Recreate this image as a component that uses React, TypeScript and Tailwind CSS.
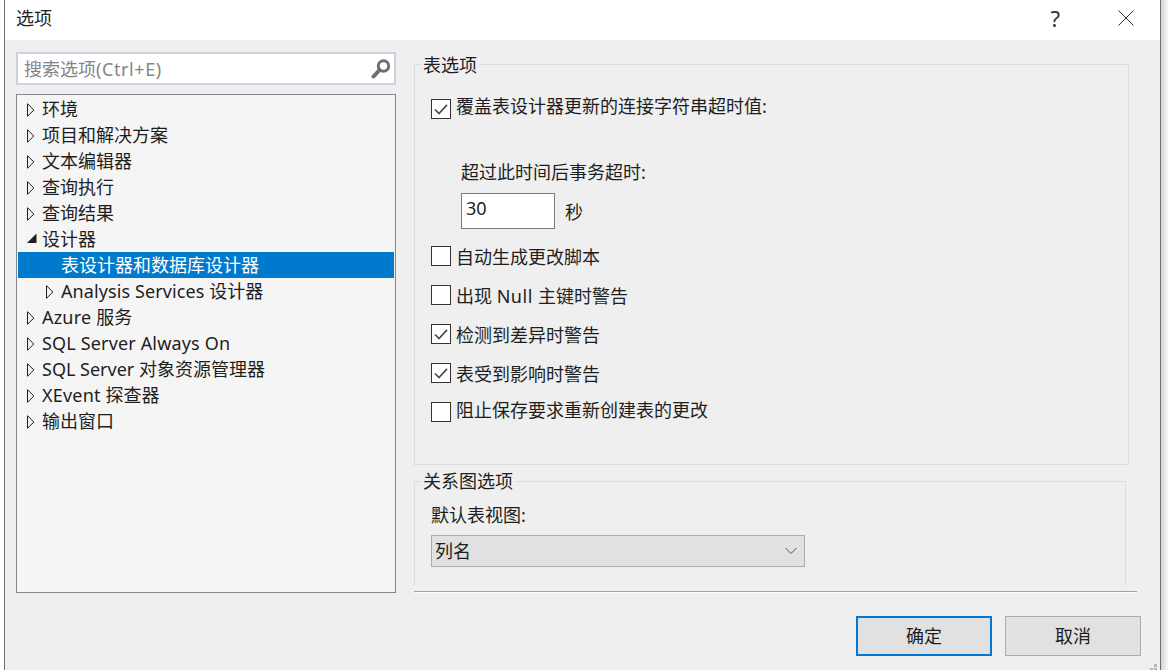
import React from "react";

function Arrow({ open }: { open?: boolean }) {
  if (open) {
    return (
      <svg width="10" height="10" viewBox="0 0 10 10" className="shrink-0 mb-[2px]">
        <path d="M0 10 L9.5 10 L9.5 0.5 Z" fill="#1e1e1e" />
      </svg>
    );
  }
  return (
    <svg width="8" height="14" viewBox="0 0 8 14" className="shrink-0 mt-[2px]">
      <path d="M0.5 0.7 L6.8 7 L0.5 13.3 Z" fill="none" stroke="#1e1e1e" strokeWidth="1" />
    </svg>
  );
}

function L({ children }: { children: React.ReactNode }) {
  return <span className="tracking-[0.2px]">{children}</span>;
}

function TreeRow({ label, open, sub, selected, leaf }: { label: React.ReactNode; open?: boolean; sub?: boolean; selected?: boolean; leaf?: boolean }) {
  return (
    <div className={`flex items-center h-[26px] ${selected ? "bg-[#007acc] text-white" : "text-[#1e1e1e]"}`}>
      <div className={`${sub ? "w-[43px] pl-[28px]" : "w-[24px] pl-[9px]"} flex items-center ${open ? "pl-[7px]" : ""} shrink-0`}>
        {!leaf && <Arrow open={open} />}
      </div>
      <span className="whitespace-nowrap">{label}</span>
    </div>
  );
}

function Tick() {
  return (
    <svg width="14" height="11" viewBox="0 0 14 11">
      <path d="M1 5.5 L5 9.5 L13 0.8" fill="none" stroke="#4a4a4a" strokeWidth="1.7" />
    </svg>
  );
}

function Check({ label, checked, last }: { label: React.ReactNode; checked?: boolean; last?: boolean }) {
  return (
    <div className="flex items-center h-5 mt-[19px]">
      <div className="w-5 h-5 bg-white border border-[#333333] flex items-center justify-center shrink-0">
        {checked && <Tick />}
      </div>
      <span className={`ml-[5px] whitespace-nowrap leading-6 ${last ? "mb-[4px]" : "mt-[2px]"}`}>{label}</span>
    </div>
  );
}

function Legend({ children }: { children: React.ReactNode }) {
  return <div className="-mt-[12px] ml-[6px] px-[2px] w-fit h-6 leading-6 bg-[#efefef]">{children}</div>;
}

export default function App() {
  return (
    <div className="w-[1168px] h-[670px] bg-white flex pl-1 overflow-hidden text-[18px] leading-6 text-[#1e1e1e] font-['Noto_Sans','Noto_Sans_CJK_SC',sans-serif]">
      <div className="w-[1157px] h-full border-x border-[#707070] flex flex-col shrink-0 relative">
        <div className="h-10 bg-white flex items-center pl-[11px] shrink-0">
          <span className="mb-1">选项</span>
          <span className="ml-auto text-[#333333] text-[22px] mb-[4px]">?</span>
          <svg width="16" height="16" viewBox="0 0 16 16" className="ml-[58px] mr-[26px] mb-[5px]">
            <path d="M0.5 0.5 L15.5 15.5 M15.5 0.5 L0.5 15.5" stroke="#333333" strokeWidth="1" fill="none" />
          </svg>
        </div>
        <div className="flex-1 bg-[#efefef] flex flex-col">
          <div className="flex pt-3 pl-[11px]">
            <div className="w-[380px] flex flex-col shrink-0">
              <div className="h-[33px] bg-white border-2 border-[#cfd0e0] flex items-center pl-[6px] pr-[3px]">
                <span className="text-[#848484] mt-[1px]">搜索选项<span className="tracking-[0.6px]">(Ctrl+E)</span></span>
                <svg width="20" height="20" viewBox="0 0 20 20" className="ml-auto">
                  <circle cx="12.5" cy="7" r="5.2" fill="none" stroke="#6e6e6e" strokeWidth="3" />
                  <path d="M8.5 11 L2.5 17.5" stroke="#6e6e6e" strokeWidth="4" strokeLinecap="round" />
                </svg>
              </div>
              <div className="mt-[9px] h-[499px] bg-[#f5f5f5] border border-[#828790] p-px">
                <TreeRow label="环境" />
                <TreeRow label="项目和解决方案" />
                <TreeRow label="文本编辑器" />
                <TreeRow label="查询执行" />
                <TreeRow label="查询结果" />
                <TreeRow label="设计器" open />
                <TreeRow label="表设计器和数据库设计器" sub leaf selected />
                <TreeRow label={<><span className="tracking-[0.1px]">Analysis Services </span>设计器</>} sub />
                <TreeRow label={<><L>Azure </L>服务</>} />
                <TreeRow label={<span className="tracking-[0.16px]">SQL Server Always On</span>} />
                <TreeRow label={<>SQL Server 对象资源管理器</>} />
                <TreeRow label={<><L>XEvent </L>探查器</>} />
                <TreeRow label="输出窗口" />
              </div>
            </div>
            <div className="ml-[18px] flex flex-col">
              <div className="mt-3 w-[715px] h-[401px] border border-[#dcdcdc] pl-4">
                <div className="-ml-4">
                  <Legend>表选项</Legend>
                </div>
                <div className="flex items-center h-5 mt-[22px]">
                  <div className="w-5 h-5 bg-white border border-[#333333] flex items-center justify-center shrink-0">
                    <Tick />
                  </div>
                  <span className="ml-[5px] whitespace-nowrap leading-6 mb-[6px]">覆盖表设计器更新的连接字符串超时值:</span>
                </div>
                <div className="mt-[41px] ml-[30px] h-6">超过此时间后事务超时:</div>
                <div className="mt-[9px] ml-[30px] flex items-center">
                  <div className="w-[94px] h-9 bg-white border border-[#7a7a7a] pl-1 flex items-center">
                    <span className="mb-[6px]">30</span>
                  </div>
                  <span className="ml-[10px] mt-[2px]">秒</span>
                </div>
                <div className="-mt-[2px]">
                  <Check label="自动生成更改脚本" />
                </div>
                <Check label={<>出现 <span className="tracking-[0.5px]">Null </span>主键时警告</>} />
                <Check label="检测到差异时警告" checked />
                <Check label="表受到影响时警告" checked />
                <Check label="阻止保存要求重新创建表的更改" last />
              </div>
              <div className="mt-4 w-[712px] h-[104px] border border-b-0 border-[#dcdcdc] pl-4">
                <div className="-ml-4">
                  <div className="-mt-[13px] ml-[6px] px-[2px] w-fit h-6 leading-6 bg-[#efefef]">关系图选项</div>
                </div>
                <div className="mt-[10px] h-6">默认表视图:</div>
                <div className="mt-2 w-[374px] h-8 bg-[#e1e1e1] border border-[#adadad] flex items-center pl-[3px] pr-[7px]">
                  <span>列名</span>
                  <svg width="12" height="8" viewBox="0 0 12 8" className="ml-auto">
                    <path d="M0.5 1 L6 6.5 L11.5 1" fill="none" stroke="#555555" strokeWidth="1" />
                  </svg>
                </div>
              </div>
              <div className="mt-[6px] w-[723px] h-[2px] border-t border-[#a0a0a0] bg-white"></div>
            </div>
          </div>
          <div className="mt-[23px] flex justify-end gap-[13px] pr-[19px]">
            <button className="w-[136px] h-10 bg-[#e1e1e1] border-2 border-[#0078d7]">确定</button>
            <button className="w-[136px] h-10 bg-[#e1e1e1] border border-[#adadad]">取消</button>
          </div>
        </div>
        <svg width="8" height="6" viewBox="0 0 8 6" className="absolute right-[2px] bottom-0">
          <rect x="4" y="0" width="3" height="3" fill="#b5b5b5" />
          <rect x="0" y="4" width="3" height="2" fill="#b5b5b5" />
          <rect x="4" y="4" width="3" height="2" fill="#b5b5b5" />
        </svg>
      </div>
      <div className="flex-1 bg-gradient-to-r from-[#d4d4d4] to-[#fafafa]"></div>
    </div>
  );
}
